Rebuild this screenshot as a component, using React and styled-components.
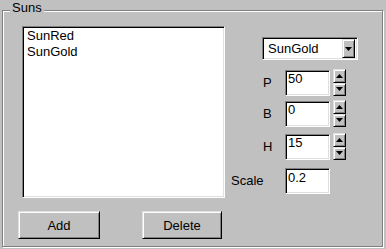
import React from "react";
import styled, { createGlobalStyle } from "styled-components";

const GlobalStyle = createGlobalStyle`
    html, body {
        margin: 0;
        padding: 0;
        background: #c0c0c0;
    }
    body {
        font-family: "Liberation Sans", Arial, sans-serif;
        font-size: 13px;
        color: #000;
    }
`;

const suns = ["SunRed", "SunGold"];

const fields = [
    { id: "p", label: "P", value: "50", spin: true, gap: 9 },
    { id: "b", label: "B", value: "0", spin: true, gap: 4 },
    { id: "h", label: "H", value: "15", spin: true, gap: 6 },
    { id: "scale", label: "Scale", value: "0.2", spin: false, gap: 8 },
];

const Arrow = ({ up }) => (
    <svg width="7" height="4" viewBox="0 0 7 4">
        {up ? <polygon points="3.5,0 7,4 0,4" fill="#000" /> : <polygon points="0,0 7,0 3.5,4" fill="#000" />}
    </svg>
);

const App = () => {
    return (
        <Page>
            <GlobalStyle />
            <Group>
                <Legend>Suns</Legend>
                <LeftCol>
                    <ListBox>
                        {suns.map((name) => (
                            <ListItem key={name}>{name}</ListItem>
                        ))}
                    </ListBox>
                    <ButtonRow>
                        <Button type="button" $width={82}>Add</Button>
                        <Button type="button" $width={80}>Delete</Button>
                    </ButtonRow>
                </LeftCol>
                <RightCol>
                    <Combo>
                        <ComboText>SunGold</ComboText>
                        <ComboButton><Arrow /></ComboButton>
                    </Combo>
                    {fields.map((f) => (
                        <FieldRow key={f.id} $gap={f.gap}>
                            <Label $indent={f.label.length === 1}>{f.label}</Label>
                            <TextBox readOnly value={f.value} />
                            {f.spin && (
                                <Spinner>
                                    <SpinButton><Arrow up /></SpinButton>
                                    <SpinButton><Arrow /></SpinButton>
                                </Spinner>
                            )}
                        </FieldRow>
                    ))}
                </RightCol>
            </Group>
        </Page>
    );
};

const Page = styled.div`
    width: 386px;
    height: 249px;
    padding: 10px 3px 0 2px;
    box-sizing: border-box;
`;

const Group = styled.div`
    position: relative;
    height: 237px;
    box-sizing: border-box;
    border: 1px solid #808080;
    box-shadow: inset 1px 1px #fff, 1px 1px #fff;
    padding: 15px 0 0 15px;
    display: flex;
`;

const Legend = styled.span`
    position: absolute;
    top: -11px;
    left: 7px;
    padding: 0 2px;
    line-height: 16px;
    background: #c0c0c0;
`;

const LeftCol = styled.div`
    display: flex;
    flex-direction: column;
    width: 207px;
`;

const sunken = `
    border: 1px solid;
    border-color: #808080 #fff #fff #808080;
    box-shadow: inset 1px 1px #000, inset -1px -1px #dfdfdf;
    background: #fff;
    box-sizing: border-box;
`;

const raised = `
    border: 1px solid;
    border-color: #dfdfdf #000 #000 #dfdfdf;
    box-shadow: inset 1px 1px #fff, inset -1px -1px #808080;
    background: #c0c0c0;
    box-sizing: border-box;
`;

const ListBox = styled.div`
    ${sunken}
    margin-left: 4px;
    width: 203px;
    height: 172px;
    padding: 1px 2px;
`;

const ListItem = styled.div`
    line-height: 16px;
    padding-left: 2px;
`;

const ButtonRow = styled.div`
    display: flex;
    gap: 42px;
    margin-top: 13px;
`;

const Button = styled.button`
    ${raised}
    width: ${(p) => p.$width}px;
    height: 28px;
    padding: 0;
    font-family: inherit;
    font-size: 13px;
    color: #000;
`;

const RightCol = styled.div`
    display: flex;
    flex-direction: column;
    margin-left: 6px;
    padding-top: 11px;
`;

const Combo = styled.div`
    ${sunken}
    margin-left: 31px;
    width: 96px;
    height: 23px;
    display: flex;
    align-items: center;
    padding: 2px;
`;

const ComboText = styled.span`
    flex: 1;
    padding-left: 3px;
    line-height: 16px;
`;

const ComboButton = styled.span`
    ${raised}
    width: 13px;
    height: 19px;
    display: flex;
    align-items: center;
    justify-content: center;
`;

const FieldRow = styled.div`
    display: grid;
    grid-template-columns: 51px 45px 13px;
    column-gap: 3px;
    align-items: center;
    margin-top: ${(p) => p.$gap}px;
`;

const Label = styled.span`
    padding-left: ${(p) => (p.$indent ? 32 : 0)}px;
    line-height: 16px;
`;

const TextBox = styled.input`
    ${sunken}
    width: 45px;
    height: 26px;
    padding: 0 2px 8px;
    margin: 0;
    font-family: inherit;
    font-size: 13px;
    color: #000;
    outline: none;
`;

const Spinner = styled.div`
    display: flex;
    flex-direction: column;
    height: 27px;
`;

const SpinButton = styled.span`
    ${raised}
    flex: 1;
    display: flex;
    align-items: center;
    justify-content: center;
`;

export default App;
